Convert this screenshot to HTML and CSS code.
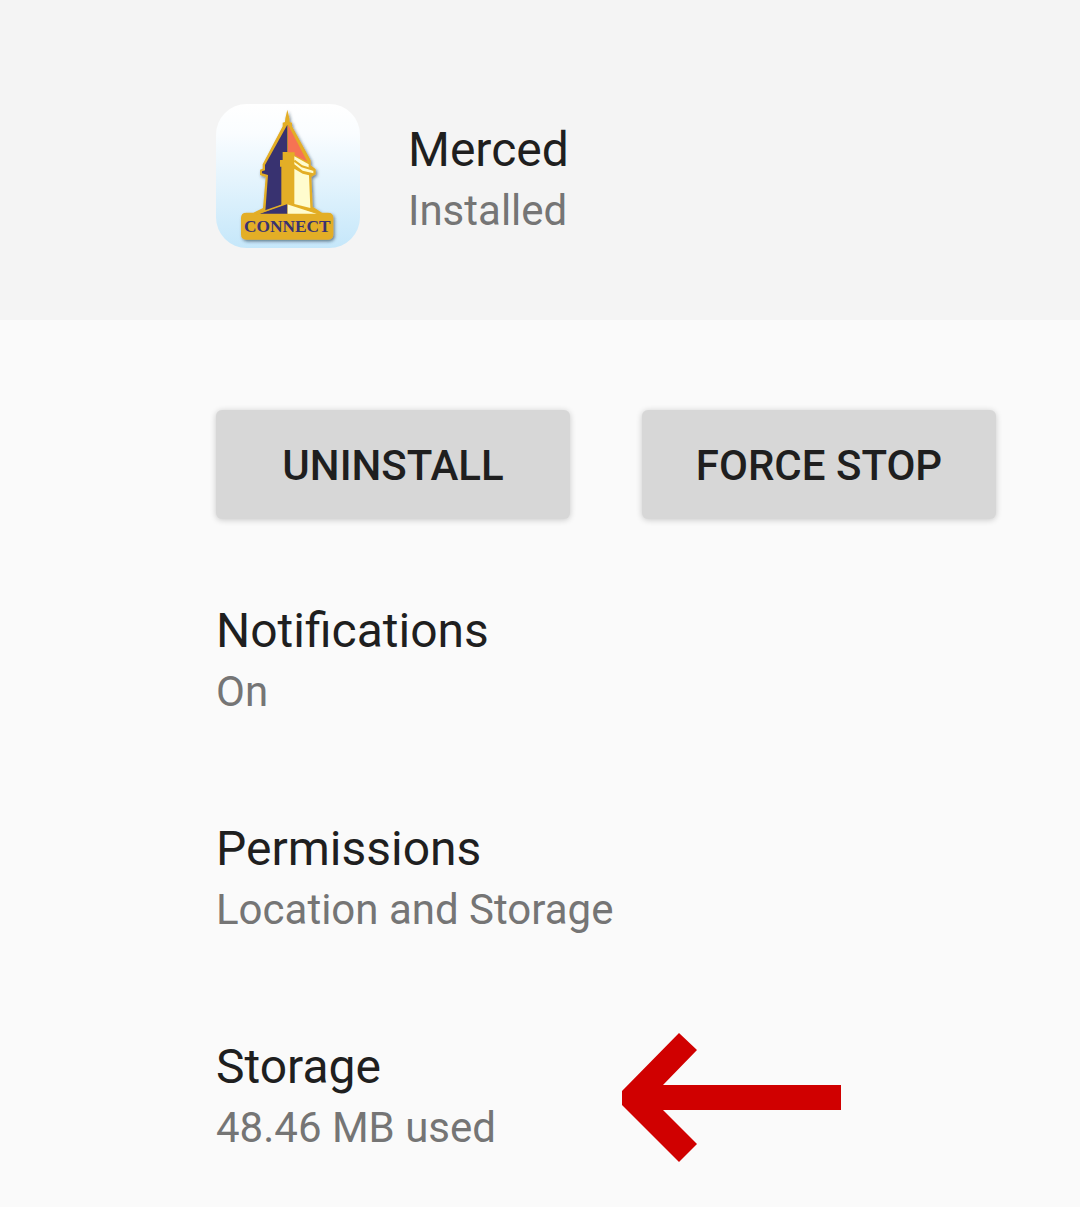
FILE: index.html
```html
<!DOCTYPE html>
<html lang="en">
<head>
  <meta charset="UTF-8">
  <meta name="viewport" content="width=device-width, initial-scale=1.0">
  <title>App info - Merced</title>
  <link rel="stylesheet" href="styles.css">
</head>
<body>

  <header class="app-header">
    <svg class="app-icon" viewBox="0 0 432 432" role="img" aria-label="Merced Connect">
      <defs>
        <linearGradient id="sky" x1="0" y1="0" x2="0" y2="1">
          <stop offset="0" stop-color="#ffffff"/>
          <stop offset="0.2" stop-color="#fafdff"/>
          <stop offset="1" stop-color="#c5e7fa"/>
        </linearGradient>
        <filter id="shadow" x="-20%" y="-20%" width="140%" height="140%">
          <feDropShadow dx="4" dy="5" stdDeviation="5" flood-color="#234" flood-opacity="0.6"/>
        </filter>
      </defs>
      <rect width="432" height="432" rx="92" fill="url(#sky)"/>
      <g filter="url(#shadow)">
        <!-- tower outline -->
        <path fill="#e3ae25" d="M214 17 L220 43 L221 54 L228 56 V67 L284 169 V184 L299 196 L299 211 L286 219 L290 308 L318 326 H336 Q352 326 352 342 V391 Q352 407 336 407 H91 Q75 407 75 391 V342 Q75 326 91 326 H112 L141 312 L149 219 L132 213 V197 L140 194 V181 L200 67 V56 L207 54 L208 43 Z"/>
        <!-- left side -->
        <path fill="#393270" d="M214 62 V144 H200 V168 H192 V188 H196 V303 L148 322 L156 213 L138 208 V202 L147 199 V183 Z"/>
        <path fill="#393270" d="M214 298 V329 H130 Z"/>
        <!-- roof and right side -->
        <path fill="#f67352" d="M216 62 L274 173 L236 154 V145 H216 Z"/>
        <path fill="#fffcce" d="M235 157 L278 181 V190 L292 200 V208 L260 200 L235 181 Z"/>
        <path fill="#fffcce" d="M235 194 L260 209 L279 214 L283 312 L235 300 Z"/>
        <path fill="none" stroke="#e3ae25" stroke-width="6" d="M235 170 L258 187 L292 197"/>
        <path fill="#fffcce" d="M215 298 L304 329 H215 Z"/>
        <path fill="none" stroke="#e3ae25" stroke-width="5" d="M122 330 L214 298 L309 329"/>
      </g>
      <text class="icon-label" x="214" y="385" text-anchor="middle">CONNECT</text>
    </svg>
    <div class="app-name">
      <h1 class="title">Merced</h1>
      <p class="summary">Installed</p>
    </div>
  </header>

  <main class="content">
    <div class="actions">
      <button type="button" class="action-btn">UNINSTALL</button>
      <button type="button" class="action-btn">FORCE STOP</button>
    </div>

    <ul class="settings">
      <li>
        <div>
          <h2 class="title">Notifications</h2>
          <p class="summary">On</p>
        </div>
      </li>
      <li>
        <div>
          <h2 class="title">Permissions</h2>
          <p class="summary">Location and Storage</p>
        </div>
      </li>
      <li>
        <div>
          <h2 class="title">Storage</h2>
          <p class="summary">48.46 MB used</p>
        </div>
        <svg class="arrow" viewBox="0 0 219 129" aria-hidden="true">
          <path fill="#d00000" d="M57 0 L75 17 L41 52 H219 V77 H41 L75 111 L57 129 L0 72 V58 Z"/>
        </svg>
      </li>
    </ul>
  </main>

</body>
</html>
```

FILE: styles.css
```css
:root {
  --text-color: #1f1f1f;
  --summary-color: #757575;
  --header-color: #f4f4f4;
  --background-color: #fafafa;
  --button-color: #d7d7d7;
  --inset: 216px;
}

body {
  font-family: Roboto, 'Liberation Sans', sans-serif;
  background-color: var(--background-color);
  color: var(--text-color);
  margin: 0;
}

.app-header {
  display: flex;
  align-items: flex-start;
  gap: 48px;
  padding: 104px 84px 72px var(--inset);
  background-color: var(--header-color);
}

.app-icon {
  width: 144px;
  height: 144px;
  flex-shrink: 0;
}

.icon-label {
  font-family: 'Liberation Serif', serif;
  font-size: 52px;
  font-weight: bold;
  fill: #393270;
}

.app-name {
  padding-top: 14px;
}

.title {
  margin: 0;
  font-size: 48px;
  font-weight: 400;
  line-height: 64px;
}

.summary {
  margin: 0;
  color: var(--summary-color);
  font-size: 42px;
  line-height: 58px;
}

.content {
  padding: 90px 84px 0 var(--inset);
}

.actions {
  display: flex;
  gap: 72px;
  margin-bottom: 32px;
}

.action-btn {
  flex: 1;
  height: 109px;
  padding: 2px 0 0;
  border: none;
  border-radius: 6px;
  background-color: var(--button-color);
  box-shadow: 0 1px 6px rgba(0, 0, 0, 0.2);
  color: var(--text-color);
  font-family: inherit;
  font-size: 42px;
  font-weight: 500;
  cursor: pointer;
}

.settings {
  list-style: none;
  margin: 0;
  padding: 0;
}

.settings li {
  display: flex;
  align-items: center;
  padding: 48px 0;
}

.arrow {
  width: 219px;
  height: 129px;
  margin: -4px 0 -6px 126px;
}
```
